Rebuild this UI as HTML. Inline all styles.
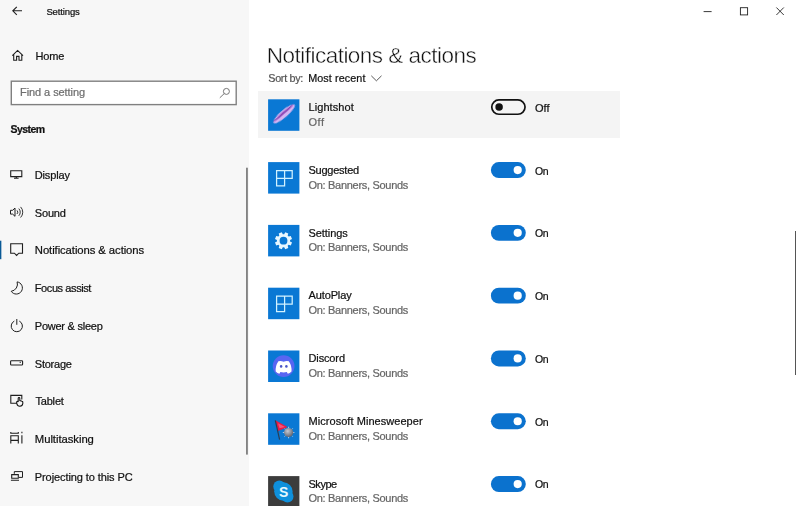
<!DOCTYPE html>
<html><head><meta charset="utf-8">
<style>
*{box-sizing:border-box;margin:0;padding:0}
html,body{width:796px;height:506px;overflow:hidden;background:#fff;font-family:"Liberation Sans",sans-serif;color:#111}
#side{position:absolute;left:0;top:0;width:248.5px;height:506px;background:#f7f7f7}
.t{position:absolute;white-space:nowrap;line-height:1;-webkit-text-stroke:0.22px currentColor}
</style></head><body>
<div id="side"></div>
<svg style="position:absolute;left:0;top:70px" width="248" height="45" viewBox="0 70 248 45"><rect x="11.3" y="81.2" width="224.9" height="23.4" fill="#fff" stroke="#808080" stroke-width="1.4"/></svg>
<svg style="position:absolute;left:0;top:238px" width="4" height="24" viewBox="0 238 4 24"><rect x="0" y="240.7" width="1.35" height="18.5" fill="#0a5a96"/></svg>
<svg style="position:absolute;left:244px;top:160px" width="5" height="300" viewBox="244 160 5 300"><rect x="246.15" y="167.7" width="1.6" height="286.9" fill="#707070"/></svg>
<div style="position:absolute;left:795px;top:231px;width:1px;height:144px;background:#555"></div>
<div style="position:absolute;left:258.3px;top:90.9px;width:361.5px;height:47.6px;background:#f4f4f4"></div>

<svg style="position:absolute;left:0;top:0" width="248" height="506" viewBox="0 0 248 506" fill="none" stroke="#1f1f1f" stroke-width="1">
<!-- back -->
<path d="M22 10.8H12.8 M16.8 6.8L12.8 10.8L16.8 14.8" stroke-width="1.1"/>
<!-- home -->
<path d="M12.3 55.7L17.6 50.4L23 55.7 M13.7 54.6V60.2H16.6V56.4H19V60.2H21.8V54.6" stroke-width="1.1"/>
<!-- search -->
<circle cx="226.4" cy="91.4" r="3" stroke="#666" stroke-width="0.9"/><path d="M224.2 93.6L219.8 97.8" stroke="#666" stroke-width="0.9"/>
<!-- display -->
<path d="M10.7 170.7H21.8V176.6H10.7Z M16.3 176.6V178.1 M14 178.2H18.6" stroke-width="1.1"/>
<!-- sound -->
<path d="M10.5 210.3H12.6L15 208.1V216.3L12.6 214.1H10.5Z" stroke-width="1"/>
<path d="M17 210.4A2.6 2.6 0 0 1 17 214 M18.8 208.6A5.2 5.2 0 0 1 18.8 215.8 M20.6 206.9A7.6 7.6 0 0 1 20.6 217.5" stroke-width="0.9"/>
<!-- notifications -->
<path d="M10.7 243.8H22.5V253.2H18.8L16.6 255.4L14.4 253.2H10.7Z" stroke-width="1.1"/>
<!-- moon -->
<path d="M17.1 281.9A6.1 6.1 0 1 1 11.2 291.3A7.2 7.2 0 0 0 17.1 281.9Z" stroke-width="1"/>
<!-- power -->
<path d="M14.3 321.1A5.6 5.6 0 1 0 19.3 321.1 M16.8 319V324.8" stroke-width="1"/>
<!-- storage -->
<rect x="10.6" y="360.7" width="12" height="4.3" rx="0.8" stroke-width="1.1"/><path d="M19.6 362.3H21" stroke-width="0.9"/>
<!-- tablet -->
<path d="M17 403.3H10.8V395.4H21.8V399.5" stroke-width="1.1"/>
<path d="M18.2 402V398.2A0.8 0.8 0 0 1 19.8 398.2V400.6L22 401.2A1 1 0 0 1 22.8 402.3V403.6A3 3 0 0 1 16.9 403.8L16.6 402.4A0.8 0.8 0 0 1 18.2 402Z" stroke-width="1.05" stroke="#111" fill="#f7f7f7"/>
<!-- multitasking -->
<path d="M10.8 435.8H18.3V440.4H10.8Z M10.8 432V433.3H18.3V432 M10.8 440.4V443.6 M18.3 440.4V443.6 M21.9 435.2V443.6 M21.9 431.8V433.2" stroke-width="1.1"/>
<!-- projecting -->
<path d="M14.3 473.8V471.6H22.5V477.4H19" stroke-width="1"/>
<path d="M11.7 474.6H18.3V478.3H11.7Z M10.9 480.2H19" stroke-width="1.1"/>
</svg>


<svg style="position:absolute;left:696px;top:0" width="100" height="24" viewBox="696 0 100 24" fill="none" stroke="#222" stroke-width="0.9">
<path d="M703.6 11.6H711.6"/>
<rect x="740.4" y="7.7" width="7.2" height="7.2"/>
<path d="M776.4 7.5L783.8 15 M783.8 7.5L776.4 15"/>
</svg>


<svg style="position:absolute;left:0;top:0" width="796" height="506" viewBox="0 0 796 506">
<defs>
<linearGradient id="fg" x1="0" y1="1" x2="1" y2="0"><stop offset="0" stop-color="#c9a4ee"/><stop offset="1" stop-color="#b98ae6"/></linearGradient>
<radialGradient id="mg" cx="0.4" cy="0.35" r="0.7"><stop offset="0" stop-color="#c4c9d3"/><stop offset="1" stop-color="#565d6b"/></radialGradient>
<filter id="bl" x="-20%" y="-50%" width="140%" height="200%"><feGaussianBlur stdDeviation="0.45"/></filter>
</defs>
<rect x="268.1" y="99.3" width="31.3" height="31.5" fill="#0a78d4"/>
<rect x="268.1" y="162.1" width="31.3" height="31.5" fill="#0a78d4"/>
<rect x="268.1" y="224.9" width="31.3" height="31.5" fill="#0a78d4"/>
<rect x="268.1" y="287.7" width="31.3" height="31.5" fill="#0a78d4"/>
<rect x="268.1" y="350.5" width="31.3" height="31.5" fill="#0a78d4"/>
<rect x="268.1" y="413.3" width="31.3" height="31.5" fill="#0a78d4"/>
<rect x="268.1" y="476.1" width="31.3" height="31.5" fill="#3c3c3c"/>
<rect x="491.75" y="99.95" width="33.3" height="14.3" rx="7.15" fill="none" stroke="#111" stroke-width="1.7"/><circle cx="499.1" cy="107.1" r="3.75" fill="#111"/>
<rect x="490.9" y="162.1" width="34.9" height="15.9" rx="7.95" fill="#0b72ce"/><circle cx="517.7" cy="170.05" r="4.1" fill="#fff"/>
<rect x="490.9" y="224.9" width="34.9" height="15.9" rx="7.95" fill="#0b72ce"/><circle cx="517.7" cy="232.85" r="4.1" fill="#fff"/>
<rect x="490.9" y="287.7" width="34.9" height="15.9" rx="7.95" fill="#0b72ce"/><circle cx="517.7" cy="295.65" r="4.1" fill="#fff"/>
<rect x="490.9" y="350.5" width="34.9" height="15.9" rx="7.95" fill="#0b72ce"/><circle cx="517.7" cy="358.45" r="4.1" fill="#fff"/>
<rect x="490.9" y="413.3" width="34.9" height="15.9" rx="7.95" fill="#0b72ce"/><circle cx="517.7" cy="421.25" r="4.1" fill="#fff"/>
<rect x="490.9" y="476.1" width="34.9" height="15.9" rx="7.95" fill="#0b72ce"/><circle cx="517.7" cy="484.05" r="4.1" fill="#fff"/>
<!-- lightshot feather -->
<g transform="translate(283.6 113.3) rotate(-41)" filter="url(#bl)">
<ellipse cx="0" cy="0.7" rx="13.8" ry="3.6" fill="#d3b4f3"/>
<ellipse cx="0" cy="-0.3" rx="13" ry="1.1" fill="#8b3fb3"/>
</g>
<path d="M276.6 170.6H292.2V178.4H284.6V185.9H276.6Z M284.6 170.6V178.4 M276.6 178.4H284.6" fill="none" stroke="#d2f2ff" stroke-width="1.25"/>
<path d="M284.18 234.13 L285.25 232.18 L288.29 233.44 L287.66 235.58 L288.62 236.54 L290.76 235.91 L292.02 238.95 L290.07 240.02 L290.07 241.38 L292.02 242.45 L290.76 245.49 L288.62 244.86 L287.66 245.82 L288.29 247.96 L285.25 249.22 L284.18 247.27 L282.82 247.27 L281.75 249.22 L278.71 247.96 L279.34 245.82 L278.38 244.86 L276.24 245.49 L274.98 242.45 L276.93 241.38 L276.93 240.02 L274.98 238.95 L276.24 235.91 L278.38 236.54 L279.34 235.58 L278.71 233.44 L281.75 232.18 L282.82 234.13Z M279.6 240.7 a3.9 3.9 0 1 0 7.8 0 a3.9 3.9 0 1 0 -7.8 0Z" fill="#e8f7ff" fill-rule="evenodd"/>
<path d="M276.6 296.2H292.2V304.0H284.6V311.5H276.6Z M284.6 296.2V304.0 M276.6 304.0H284.6" fill="none" stroke="#d2f2ff" stroke-width="1.25"/>
<!-- discord -->
<g transform="translate(0 350.5)">
<circle cx="283.6" cy="15.6" r="10.9" fill="#5865f2"/>
<path d="M278.4 10.8Q281 10.1 283.6 11.3Q286.2 10.1 288.8 10.8Q292 15.5 291.5 21Q289.8 22.7 287.8 23.3L286.8 21.6Q283.6 22.5 280.4 21.6L279.4 23.3Q277.4 22.7 275.7 21Q275.2 15.5 278.4 10.8Z" fill="#fff"/>
<ellipse cx="281.1" cy="15.9" rx="1.25" ry="1.4" fill="#4a56c8"/><ellipse cx="286.4" cy="15.9" rx="1.25" ry="1.4" fill="#4a56c8"/>
</g>
<!-- minesweeper -->
<g transform="translate(0 413.7)">
<path d="M288.6 13v11.6 M282.8 18.8h11.6 M284.5 14.7l8.2 8.2 M292.7 14.7l-8.2 8.2" stroke="#a9c9e6" stroke-width="1"/>
<circle cx="288.6" cy="18.8" r="4.6" fill="url(#mg)"/>
<path d="M275.3 6.6L287.6 13.3L278.2 17.4Z" fill="#ea1a45"/><path d="M278 9.5L285 13.2L279.5 14.5Z" fill="#f4557a"/>
<path d="M275.3 6.6L279.6 26" stroke="#2a3d55" stroke-width="1.2"/>
</g>
<!-- skype -->
<g transform="translate(0 476.1)" fill="#0f90dc"><circle cx="283.4" cy="15.4" r="9.2"/><circle cx="279.3" cy="10.4" r="6"/><circle cx="287.5" cy="20.4" r="6"/></g>
<text transform="translate(283.6 497.4) scale(0.9 1)" text-anchor="middle" font-family="Liberation Sans, sans-serif" font-size="15.5" font-weight="bold" fill="#e6f8ff">S</text>
</svg>

<svg style="position:absolute;left:368px;top:72px" width="16" height="12" viewBox="368 72 16 12" fill="none" stroke="#444" stroke-width="0.9"><path d="M371.3 75.8L376.4 80.8L381.5 75.8"/></svg>
<div style="position:absolute;left:0;top:0;width:796px;height:506px;will-change:transform">
<div class="t" style="left:46.4px;top:7px;font-size:9.5px;color:#111;letter-spacing:-0.13px">Settings</div>
<div class="t" style="left:35.6px;top:51px;font-size:11px;color:#111;letter-spacing:-0.18px">Home</div>
<div class="t" style="left:20.0px;top:87px;font-size:11px;color:#6e6e6e;letter-spacing:-0.07px">Find a setting</div>
<div class="t" style="left:10.5px;top:124px;font-size:10.5px;color:#111;font-weight:bold;letter-spacing:-0.55px">System</div>
<div class="t" style="left:266.8px;top:45px;font-size:22.5px;color:#111;-webkit-text-stroke:0.45px #fff;letter-spacing:-0.52px">Notifications &amp; actions</div>
<div class="t" style="left:268.3px;top:73px;font-size:10.8px;color:#555;letter-spacing:-0.32px">Sort by:</div>
<div class="t" style="left:308.2px;top:73px;font-size:10.8px;color:#111;letter-spacing:0.08px">Most recent</div>
<div class="t" style="left:34.8px;top:170px;font-size:11px;color:#111;letter-spacing:-0.16px">Display</div>
<div class="t" style="left:34.8px;top:208px;font-size:11px;color:#111;letter-spacing:-0.18px">Sound</div>
<div class="t" style="left:34.8px;top:245px;font-size:11.3px;color:#111;letter-spacing:-0.08px">Notifications &amp; actions</div>
<div class="t" style="left:34.8px;top:283px;font-size:11px;color:#111;letter-spacing:-0.41px">Focus assist</div>
<div class="t" style="left:34.8px;top:321px;font-size:11px;color:#111;letter-spacing:-0.24px">Power &amp; sleep</div>
<div class="t" style="left:34.8px;top:359px;font-size:11px;color:#111;letter-spacing:-0.24px">Storage</div>
<div class="t" style="left:35.4px;top:396px;font-size:11px;color:#111;letter-spacing:-0.17px">Tablet</div>
<div class="t" style="left:34.8px;top:434px;font-size:11.3px;color:#111;letter-spacing:-0.05px">Multitasking</div>
<div class="t" style="left:34.8px;top:472px;font-size:11px;color:#111;letter-spacing:-0.09px">Projecting to this PC</div>
<div class="t" style="left:308.5px;top:102px;font-size:11px;color:#111;letter-spacing:0.07px">Lightshot</div>
<div class="t" style="left:308.5px;top:117px;font-size:11px;color:#666;letter-spacing:0.51px">Off</div>
<div class="t" style="left:534.9px;top:103px;font-size:11px;color:#111;letter-spacing:0.06px">Off</div>
<div class="t" style="left:308.5px;top:165px;font-size:11px;color:#111;letter-spacing:-0.24px">Suggested</div>
<div class="t" style="left:308.5px;top:180px;font-size:11px;color:#666;letter-spacing:-0.3px">On: Banners, Sounds</div>
<div class="t" style="left:534.9px;top:166px;font-size:10.5px;color:#111;letter-spacing:-0.22px">On</div>
<div class="t" style="left:308.5px;top:228px;font-size:11px;color:#111;letter-spacing:-0.06px">Settings</div>
<div class="t" style="left:308.5px;top:242px;font-size:11px;color:#666;letter-spacing:-0.3px">On: Banners, Sounds</div>
<div class="t" style="left:534.9px;top:228px;font-size:10.5px;color:#111;letter-spacing:-0.22px">On</div>
<div class="t" style="left:308.5px;top:290px;font-size:11px;color:#111;letter-spacing:-0.12px">AutoPlay</div>
<div class="t" style="left:308.5px;top:305px;font-size:11px;color:#666;letter-spacing:-0.3px">On: Banners, Sounds</div>
<div class="t" style="left:534.9px;top:291px;font-size:10.5px;color:#111;letter-spacing:-0.22px">On</div>
<div class="t" style="left:308.5px;top:353px;font-size:11px;color:#111;letter-spacing:-0.13px">Discord</div>
<div class="t" style="left:308.5px;top:368px;font-size:11px;color:#666;letter-spacing:-0.3px">On: Banners, Sounds</div>
<div class="t" style="left:534.9px;top:354px;font-size:10.5px;color:#111;letter-spacing:-0.22px">On</div>
<div class="t" style="left:308.5px;top:416px;font-size:11px;color:#111;letter-spacing:0.05px">Microsoft Minesweeper</div>
<div class="t" style="left:308.5px;top:431px;font-size:11px;color:#666;letter-spacing:-0.3px">On: Banners, Sounds</div>
<div class="t" style="left:534.9px;top:417px;font-size:10.5px;color:#111;letter-spacing:-0.22px">On</div>
<div class="t" style="left:308.5px;top:479px;font-size:11px;color:#111;letter-spacing:-0.47px">Skype</div>
<div class="t" style="left:308.5px;top:493px;font-size:11px;color:#666;letter-spacing:-0.3px">On: Banners, Sounds</div>
<div class="t" style="left:534.9px;top:479px;font-size:10.5px;color:#111;letter-spacing:-0.22px">On</div>
</div>
</body></html>
